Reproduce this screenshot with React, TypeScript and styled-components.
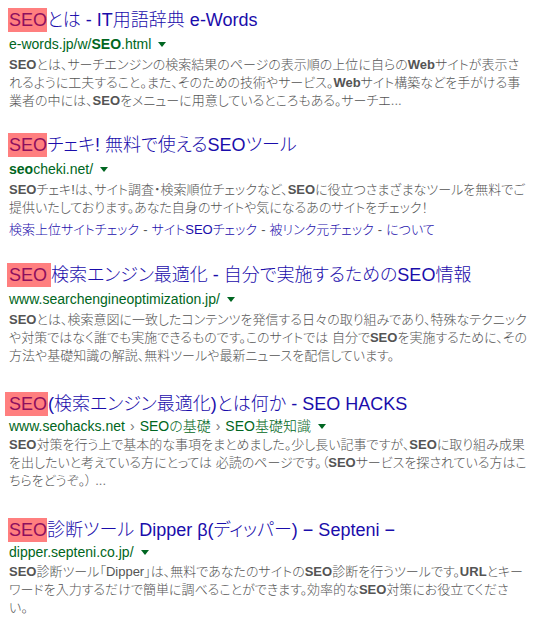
import React from "react";
import styled, { createGlobalStyle } from "styled-components";

const Global = createGlobalStyle`
  html, body { margin: 0; padding: 0; background: #fff; }
  body {
    padding: 8px 0 0 9px;
    font-family: "Liberation Sans", Arial, "Noto Sans CJK JP", sans-serif;
  }
`;

const List = styled.div`
  display: flex;
  flex-direction: column;
  width: 512px;
`;

const Result = styled.div<{ $top: number }>`
  display: flex;
  flex-direction: column;
  margin-top: ${(p) => p.$top}px;
`;

const Title = styled.a`
  display: block;
  font-size: 18px;
  line-height: 24px;
  font-weight: 300;
  color: #1a0dab;
  text-decoration: none;
  white-space: nowrap;
  font-feature-settings: "palt";
`;

const Hl = styled.span<{ $pl?: number; $pr?: number }>`
  background: #ff7f7f;
  color: #8e0f5e;
  padding: 2px ${(p) => p.$pr ?? 0}px 2px ${(p) => p.$pl ?? 0}px;
  margin-left: ${(p) => -(p.$pl ?? 0)}px;
`;

const UrlLine = styled.div<{ $mt: number }>`
  display: flex;
  align-items: center;
  margin-top: ${(p) => p.$mt}px;
  font-size: 14px;
  line-height: 18px;
  font-weight: 300;
  color: #006621;
  white-space: nowrap;
  font-feature-settings: "palt";
  b { font-weight: bold; }
`;

const Arrow = styled.span`
  display: inline-block;
  width: 0;
  height: 0;
  margin-left: 7px;
  margin-top: 1px;
  border-top: 5px solid #006621;
  border-left: 4px solid transparent;
  border-right: 4px solid transparent;
`;

const Crumb = styled.span`
  color: #777;
  margin: 0 5px;
`;

const Snippet = styled.div<{ $mt: number }>`
  display: flex;
  flex-direction: column;
  margin-top: ${(p) => p.$mt}px;
  font-size: 13px;
  line-height: 18px;
  font-weight: 300;
  color: #545454;
  font-feature-settings: "palt";
  b { font-weight: bold; color: #545454; }
`;

const Line = styled.div<{ $full?: boolean; $w?: number }>`
  white-space: nowrap;
  width: ${(p) => (p.$w ? `${p.$w}px` : "auto")};
  text-align: ${(p) => (p.$full ? "justify" : "left")};
  text-align-last: ${(p) => (p.$full ? "justify" : "left")};
  text-justify: inter-character;
`;

const Links = styled.div`
  margin-top: 4px;
  font-size: 13px;
  line-height: 18px;
  font-weight: 300;
  color: #1a0dab;
  white-space: nowrap;
  font-feature-settings: "palt";
`;

const Sep = styled.span`
  color: #545454;
  margin: 0 4px;
`;

const Muted = styled.span`
  color: #777;
`;

export default function App() {
  return (
    <>
      <Global />
      <List lang="ja">
        <Result $top={0}>
          <Title><Hl $pl={1}>SEO</Hl>とは - IT用語辞典 e-Words</Title>
          <UrlLine $mt={3}>e-words.jp/w/<b>SEO</b>.html<Arrow /></UrlLine>
          <Snippet $mt={3}>
            <Line $full $w={510}><b>SEO</b>とは、サーチエンジンの検索結果のページの表示順の上位に自らの<b>Web</b>サイトが表示さ</Line>
            <Line $full $w={508}>れるように工夫すること。また、そのための技術やサービス。<b>Web</b>サイト構築などを手がける事</Line>
            <Line>業者の中には、<b>SEO</b>をメニューに用意しているところもある。サーチエ<Muted>...</Muted></Line>
          </Snippet>
        </Result>

        <Result $top={23}>
          <Title><Hl $pl={1}>SEO</Hl>チェキ! 無料で使えるSEOツール</Title>
          <UrlLine $mt={3}><b>seo</b>cheki.net/<Arrow /></UrlLine>
          <Snippet $mt={3}>
            <Line $full $w={506}><b>SEO</b>チェキ!は、サイト調査・検索順位チェックなど、<b>SEO</b>に役立つさまざまなツールを無料でご</Line>
            <Line>提供いたしております。あなた自身のサイトや気になるあのサイトをチェック！</Line>
          </Snippet>
          <Links>
            検索上位サイトチェック<Sep>-</Sep>サイトSEOチェック<Sep>-</Sep>被リンク元チェック<Sep>-</Sep>について
          </Links>
        </Result>

        <Result $top={24}>
          <Title><Hl $pl={2} $pr={4}>SEO</Hl>検索エンジン最適化 - 自分で実施するためのSEO情報</Title>
          <UrlLine $mt={3}>www.searchengineoptimization.jp/<Arrow /></UrlLine>
          <Snippet $mt={3}>
            <Line $full $w={510}><b>SEO</b>とは、検索意図に一致したコンテンツを発信する日々の取り組みであり、特殊なテクニック</Line>
            <Line $full $w={510}>や対策ではなく誰でも実施できるものです。このサイトでは 自分で<b>SEO</b>を実施するために、その</Line>
            <Line>方法や基礎知識の解説、無料ツールや最新ニュースを配信しています。</Line>
          </Snippet>
        </Result>

        <Result $top={27}>
          <Title><Hl $pl={4} $pr={1}>SEO</Hl>(検索エンジン最適化)とは何か - SEO HACKS</Title>
          <UrlLine $mt={1}>
            www.seohacks.net<Crumb>›</Crumb>SEOの基礎<Crumb>›</Crumb>SEO基礎知識<Arrow />
          </UrlLine>
          <Snippet $mt={1}>
            <Line $full $w={510}><b>SEO</b>対策を行う上で基本的な事項をまとめました。少し長い記事ですが、<b>SEO</b>に取り組み成果</Line>
            <Line $full $w={510}>を出したいと考えている方にとっては 必読のページです。（<b>SEO</b>サービスを探されている方はこ</Line>
            <Line>ちらをどうぞ。） <Muted>...</Muted></Line>
          </Snippet>
        </Result>

        <Result $top={28}>
          <Title><Hl $pl={1}>SEO</Hl>診断ツール Dipper β(ディッパー) − Septeni −</Title>
          <UrlLine $mt={1}>dipper.septeni.co.jp/<Arrow /></UrlLine>
          <Snippet $mt={2}>
            <Line $full $w={507}><b>SEO</b>診断ツール「Dipper」は、無料であなたのサイトの<b>SEO</b>診断を行うツールです。<b>URL</b>とキー</Line>
            <Line $full $w={493}>ワードを入力するだけで簡単に調べることができます。効率的な<b>SEO</b>対策にお役立てくださ</Line>
            <Line>い。</Line>
          </Snippet>
        </Result>
      </List>
    </>
  );
}
